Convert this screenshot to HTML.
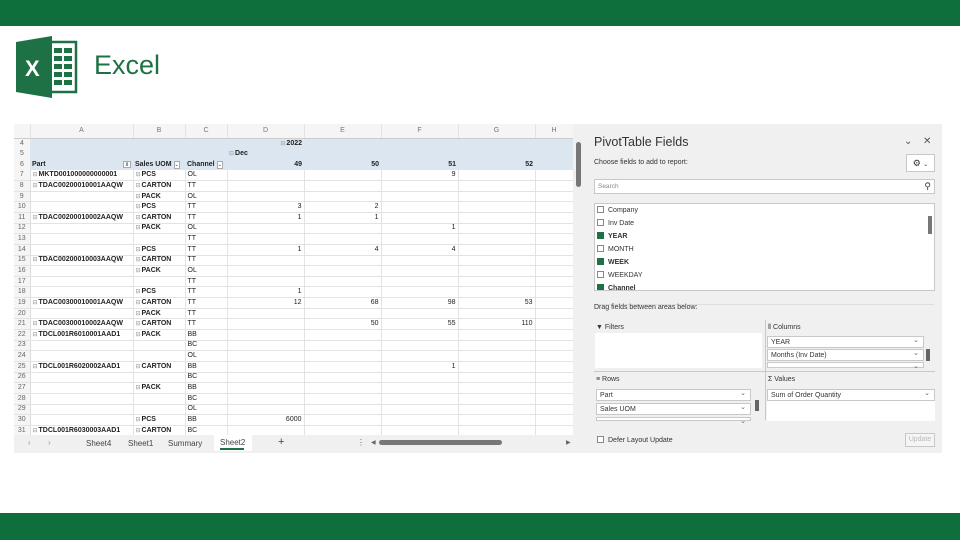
<!DOCTYPE html>
<html><head><meta charset="utf-8"><style>
*{margin:0;padding:0;box-sizing:border-box}
body{width:960px;height:540px;background:#fff;position:relative;overflow:hidden;font-family:"Liberation Sans",sans-serif}
.bar{position:absolute;left:0;width:960px;background:#0e6e3c}
.abs{position:absolute}
#sheet{position:absolute;left:14px;top:124px;width:572px;height:329px;background:#fff;overflow:hidden}
table{border-collapse:collapse;table-layout:fixed;font-size:7px;color:#222}
tr{height:10.65px}
td{height:10.45px;border-right:1px solid #e3e3e3;border-bottom:1px solid #e3e3e3;padding:0 2px;white-space:nowrap;overflow:hidden;line-height:8px}
td.rn{color:#666;text-align:center;background:#f5f5f5;border-right:1px solid #ddd}
tr.hd{height:14px}
tr.hd td{height:14px;background:#f5f5f5;color:#777;text-align:center;border-bottom:1px solid #ccc}
tr.bl td{background:#dce6f1;border-right:none;border-bottom:none}
tr.bl td.rn{background:#f5f5f5}
b{font-weight:bold}
.r{text-align:right}
.m{color:#999;font-size:6px;margin-right:1px}
#pane{position:absolute;left:586px;top:124px;width:356px;height:329px;background:#f0f0f0;font-size:7px;color:#333}
.box{position:absolute;background:#fff;border:1px solid #c8c8c8}
.cb{display:inline-block;width:7px;height:7px;border:1px solid #888;background:#fff;vertical-align:-1px;margin-right:4px}
.cb.on{background:#1e7145;border-color:#1e7145}
.fld{height:13px;line-height:13px;padding-left:2px}
.dd{position:absolute;background:#fff;border:1px solid #c8c8c8;height:12px;line-height:11px;padding-left:3px;font-size:7px}
.dd:after{content:"⌄";position:absolute;right:4px;top:-2px;font-size:7px;color:#666}
</style></head><body>
<div class="bar" style="top:0;height:26px"></div>
<div class="bar" style="top:513px;height:27px"></div>

<svg class="abs" style="left:16px;top:36px" width="62" height="62" viewBox="0 0 62 62">
<rect x="22" y="6" width="38" height="50" fill="#fff" stroke="#1e7145" stroke-width="2.5"/>
<g fill="#1e7145"><rect x="38" y="12" width="8" height="5"/><rect x="48" y="12" width="8" height="5"/><rect x="38" y="20" width="8" height="5"/><rect x="48" y="20" width="8" height="5"/><rect x="38" y="28" width="8" height="5"/><rect x="48" y="28" width="8" height="5"/><rect x="38" y="36" width="8" height="5"/><rect x="48" y="36" width="8" height="5"/><rect x="38" y="44" width="8" height="5"/><rect x="48" y="44" width="8" height="5"/></g>
<path d="M0 6 L36 0 L36 62 L0 56 Z" fill="#1e7145"/>
<text x="9" y="40" font-family="Liberation Sans" font-weight="bold" font-size="22" fill="#fff">X</text>
</svg>
<div class="abs" style="left:94px;top:50px;font-size:27px;color:#1e7145;font-family:'Liberation Sans',sans-serif">Excel</div>

<div id="sheet">
<table>
<colgroup><col style="width:16px"><col style="width:103px"><col style="width:52px"><col style="width:42px"><col style="width:77px"><col style="width:77px"><col style="width:77px"><col style="width:77px"><col style="width:38px"></colgroup>
<tr class="hd"><td></td><td>A</td><td>B</td><td>C</td><td>D</td><td>E</td><td>F</td><td>G</td><td>H</td></tr>
<tr class="bl"><td class="rn">4</td><td></td><td></td><td></td><td class="r"><span class="m">⊟</span><b>2022</b></td><td></td><td></td><td></td><td></td></tr>
<tr class="bl"><td class="rn">5</td><td></td><td></td><td></td><td><span class="m">⊟</span><b>Dec</b></td><td></td><td></td><td></td><td></td></tr>
<tr class="bl"><td class="rn">6</td><td><b>Part</b><span style="float:right;border:1px solid #aaa;background:#fff;width:8px;height:7px;font-size:5px;text-align:center;line-height:6px">⊻</span></td><td><b>Sales UOM</b> <span style="border:1px solid #aaa;background:#fff;font-size:5px">⌄</span></td><td><b>Channel</b> <span style="border:1px solid #aaa;background:#fff;font-size:5px">⌄</span></td><td class="r"><b>49</b></td><td class="r"><b>50</b></td><td class="r"><b>51</b></td><td class="r"><b>52</b></td><td></td></tr>
<tr><td class="rn">7</td><td><span class="m">⊟</span><b>MKTD001000000000001</b></td><td><span class="m">⊟</span><b>PCS</b></td><td>OL</td><td></td><td></td><td class="r">9</td><td></td><td></td></tr>
<tr><td class="rn">8</td><td><span class="m">⊟</span><b>TDAC00200010001AAQW</b></td><td><span class="m">⊟</span><b>CARTON</b></td><td>TT</td><td></td><td></td><td></td><td></td><td></td></tr>
<tr><td class="rn">9</td><td></td><td><span class="m">⊟</span><b>PACK</b></td><td>OL</td><td></td><td></td><td></td><td></td><td></td></tr>
<tr><td class="rn">10</td><td></td><td><span class="m">⊟</span><b>PCS</b></td><td>TT</td><td class="r">3</td><td class="r">2</td><td></td><td></td><td></td></tr>
<tr><td class="rn">11</td><td><span class="m">⊟</span><b>TDAC00200010002AAQW</b></td><td><span class="m">⊟</span><b>CARTON</b></td><td>TT</td><td class="r">1</td><td class="r">1</td><td></td><td></td><td></td></tr>
<tr><td class="rn">12</td><td></td><td><span class="m">⊟</span><b>PACK</b></td><td>OL</td><td></td><td></td><td class="r">1</td><td></td><td></td></tr>
<tr><td class="rn">13</td><td></td><td></td><td>TT</td><td></td><td></td><td></td><td></td><td></td></tr>
<tr><td class="rn">14</td><td></td><td><span class="m">⊟</span><b>PCS</b></td><td>TT</td><td class="r">1</td><td class="r">4</td><td class="r">4</td><td></td><td></td></tr>
<tr><td class="rn">15</td><td><span class="m">⊟</span><b>TDAC00200010003AAQW</b></td><td><span class="m">⊟</span><b>CARTON</b></td><td>TT</td><td></td><td></td><td></td><td></td><td></td></tr>
<tr><td class="rn">16</td><td></td><td><span class="m">⊟</span><b>PACK</b></td><td>OL</td><td></td><td></td><td></td><td></td><td></td></tr>
<tr><td class="rn">17</td><td></td><td></td><td>TT</td><td></td><td></td><td></td><td></td><td></td></tr>
<tr><td class="rn">18</td><td></td><td><span class="m">⊟</span><b>PCS</b></td><td>TT</td><td class="r">1</td><td></td><td></td><td></td><td></td></tr>
<tr><td class="rn">19</td><td><span class="m">⊟</span><b>TDAC00300010001AAQW</b></td><td><span class="m">⊟</span><b>CARTON</b></td><td>TT</td><td class="r">12</td><td class="r">68</td><td class="r">98</td><td class="r">53</td><td></td></tr>
<tr><td class="rn">20</td><td></td><td><span class="m">⊟</span><b>PACK</b></td><td>TT</td><td></td><td></td><td></td><td></td><td></td></tr>
<tr><td class="rn">21</td><td><span class="m">⊟</span><b>TDAC00300010002AAQW</b></td><td><span class="m">⊟</span><b>CARTON</b></td><td>TT</td><td></td><td class="r">50</td><td class="r">55</td><td class="r">110</td><td></td></tr>
<tr><td class="rn">22</td><td><span class="m">⊟</span><b>TDCL001R6010001AAD1</b></td><td><span class="m">⊟</span><b>PACK</b></td><td>BB</td><td></td><td></td><td></td><td></td><td></td></tr>
<tr><td class="rn">23</td><td></td><td></td><td>BC</td><td></td><td></td><td></td><td></td><td></td></tr>
<tr><td class="rn">24</td><td></td><td></td><td>OL</td><td></td><td></td><td></td><td></td><td></td></tr>
<tr><td class="rn">25</td><td><span class="m">⊟</span><b>TDCL001R6020002AAD1</b></td><td><span class="m">⊟</span><b>CARTON</b></td><td>BB</td><td></td><td></td><td class="r">1</td><td></td><td></td></tr>
<tr><td class="rn">26</td><td></td><td></td><td>BC</td><td></td><td></td><td></td><td></td><td></td></tr>
<tr><td class="rn">27</td><td></td><td><span class="m">⊟</span><b>PACK</b></td><td>BB</td><td></td><td></td><td></td><td></td><td></td></tr>
<tr><td class="rn">28</td><td></td><td></td><td>BC</td><td></td><td></td><td></td><td></td><td></td></tr>
<tr><td class="rn">29</td><td></td><td></td><td>OL</td><td></td><td></td><td></td><td></td><td></td></tr>
<tr><td class="rn">30</td><td></td><td><span class="m">⊟</span><b>PCS</b></td><td>BB</td><td class="r">6000</td><td></td><td></td><td></td><td></td></tr>
<tr><td class="rn">31</td><td><span class="m">⊟</span><b>TDCL001R6030003AAD1</b></td><td><span class="m">⊟</span><b>CARTON</b></td><td>BC</td><td></td><td></td><td></td><td></td><td></td></tr>
</table>
<div class="abs" style="left:559px;top:0;width:13px;height:312px;background:#f0f0f0"></div>
<div class="abs" style="left:562px;top:18px;width:5px;height:45px;background:#777;border-radius:3px"></div>
<div class="abs" style="left:0;top:311px;width:572px;height:18px;background:#f0f0f0;font-size:8px;color:#444">
<span class="abs" style="left:14px;top:3px;color:#999">‹</span><span class="abs" style="left:34px;top:3px;color:#999">›</span>
<span class="abs" style="left:72px;top:4px">Sheet4</span><span class="abs" style="left:114px;top:4px">Sheet1</span><span class="abs" style="left:154px;top:4px">Summary</span>
<div class="abs" style="left:200px;top:0;width:38px;height:16px;background:#fff"></div>
<span class="abs" style="left:206px;top:3px">Sheet2</span>
<div class="abs" style="left:206px;top:13px;width:24px;height:1.5px;background:#1e7145"></div>
<span class="abs" style="left:264px;top:1px;font-size:11px">+</span>
<span class="abs" style="left:343px;top:3px;color:#666">⋮</span>
<span class="abs" style="left:357px;top:4px;font-size:6px;color:#666">◀</span>
<div class="abs" style="left:365px;top:5px;width:123px;height:5px;background:#777;border-radius:3px"></div>
<span class="abs" style="left:552px;top:4px;font-size:6px;color:#666">▶</span>
</div>
</div>

<div id="pane">
<div class="abs" style="left:8px;top:11px;font-size:12.5px;color:#333">PivotTable Fields</div>
<div class="abs" style="left:318px;top:12px;font-size:10px;color:#555">⌄</div>
<div class="abs" style="left:337px;top:12px;font-size:10px;color:#555">✕</div>
<div class="abs" style="left:8px;top:35px">Choose fields to add to report:</div>
<div class="box" style="left:320px;top:30px;width:29px;height:18px;font-size:9px;text-align:center;line-height:16px">⚙ <span style="font-size:6px">⌄</span></div>
<div class="box" style="left:8px;top:55px;width:341px;height:15px;color:#888;line-height:13px;padding-left:3px;font-size:6.5px">Search<span style="position:absolute;right:3px;top:0;font-size:9px;color:#333">⚲</span></div>
<div class="box" style="left:8px;top:79px;width:341px;height:88px;overflow:hidden;padding-top:0">
<div class="fld"><span class="cb"></span>Company</div>
<div class="fld"><span class="cb"></span>Inv Date</div>
<div class="fld"><span class="cb on"></span><b>YEAR</b></div>
<div class="fld"><span class="cb"></span>MONTH</div>
<div class="fld"><span class="cb on"></span><b>WEEK</b></div>
<div class="fld"><span class="cb"></span>WEEKDAY</div>
<div class="fld"><span class="cb on"></span><b>Channel</b></div>
<div class="abs" style="right:2px;top:12px;width:4px;height:18px;background:#777"></div>
</div>
<div class="abs" style="left:8px;top:180px;width:340px;height:1px;background:#ddd"></div>
<div class="abs" style="left:8px;top:180px">Drag fields between areas below:</div>
<div class="abs" style="left:10px;top:200px">▼ Filters</div>
<div class="box" style="left:9px;top:209px;width:167px;height:35px;border:none"></div>
<div class="abs" style="left:182px;top:200px">⦀ Columns</div>
<div class="dd" style="left:181px;top:212px;width:157px">YEAR</div>
<div class="dd" style="left:181px;top:225px;width:157px">Months (Inv Date)</div>
<div class="dd" style="left:181px;top:238px;width:157px;height:6px"></div>
<div class="abs" style="left:340px;top:225px;width:4px;height:12px;background:#666"></div>
<div class="abs" style="left:8px;top:247px;width:341px;height:1px;background:#c8c8c8"></div>
<div class="abs" style="left:179px;top:196px;width:1px;height:100px;background:#c8c8c8"></div>
<div class="abs" style="left:10px;top:252px">≡ Rows</div>
<div class="dd" style="left:10px;top:265px;width:155px">Part</div>
<div class="dd" style="left:10px;top:279px;width:155px">Sales UOM</div>
<div class="dd" style="left:10px;top:293px;width:155px;height:4px"></div>
<div class="abs" style="left:169px;top:276px;width:4px;height:11px;background:#666"></div>
<div class="abs" style="left:182px;top:252px">Σ Values</div>
<div class="dd" style="left:181px;top:265px;width:168px">Sum of Order Quantity</div>
<div class="box" style="left:181px;top:277px;width:168px;height:20px;border:none"></div>
<div class="abs" style="left:11px;top:312px"><span class="cb"></span>Defer Layout Update</div>
<div class="box" style="left:319px;top:309px;width:30px;height:14px;color:#bbb;text-align:center;line-height:12px;background:#f5f5f5">Update</div>
</div>
</body></html>
